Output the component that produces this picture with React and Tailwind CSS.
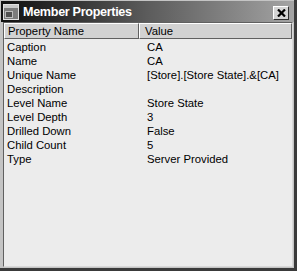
import React from "react";

const rows = [
  ["Caption", "CA"],
  ["Name", "CA"],
  ["Unique Name", "[Store].[Store State].&[CA]"],
  ["Description", ""],
  ["Level Name", "Store State"],
  ["Level Depth", "3"],
  ["Drilled Down", "False"],
  ["Child Count", "5"],
  ["Type", "Server Provided"],
];

const App = () => {
  return (
    <div
      className="w-[297px] h-[271px] flex flex-col bg-[#c4c4c4] border-r-[3px] border-b-[3px] border-[#3a3a3a] overflow-hidden"
      style={{ fontFamily: '"Liberation Sans", Arial, sans-serif' }}
    >
      {/* title bar */}
      <div className="h-[21px] ml-[1px] mt-[1px] flex items-center bg-gradient-to-r from-[#101010] via-[#5c5c5c] to-[#a4a4a4]">
        <div className="ml-[2px] w-[16px] h-[16px] bg-[#7c7c7c] border border-[#e0e0e0] flex flex-col">
          <div className="h-[3px] bg-[#c8c8c8]" />
          <div className="flex-1 flex items-end">
            <div className="ml-[1px] mb-[1px] w-[8px] h-[7px] bg-[#505050] border border-[#bdbdbd]" />
          </div>
        </div>
        <span className="ml-[4px] mt-[2px] text-white font-bold text-[12.6px] tracking-tight">
          Member Properties
        </span>
        <div className="ml-auto mr-[5px] mt-[3px] w-[16px] h-[14px] bg-[#d4d4d4] border border-t-white border-l-white border-r-[#303030] border-b-[#303030] flex items-center justify-center">
          <svg width="9" height="8" viewBox="0 0 9 8">
            <path d="M1 0.5 L8 7.5 M8 0.5 L1 7.5" stroke="#000" strokeWidth="2.2" />
          </svg>
        </div>
      </div>

      {/* list body */}
      <div className="flex-1 ml-[3px] mr-[1px] mb-[1px] bg-[#ececec] border border-l-[#606060] border-t-[#606060] border-r-[#d8d8d8] border-b-[#d8d8d8] flex flex-col text-[11.3px] text-black">
        <div className="flex h-[16px]">
          <div className="w-[135px] pl-[3px] flex items-center bg-[#d2d2d2] border border-t-white border-l-white border-r-[#606060] border-b-[#606060]">
            Property Name
          </div>
          <div className="flex-1 pl-[5px] flex items-center bg-[#d2d2d2] border border-t-white border-l-white border-r-[#606060] border-b-[#606060]">
            Value
          </div>
        </div>
        <div className="pt-[1px]">
          {rows.map(([name, value]) => (
            <div key={name} className="flex h-[14px] items-center">
              <div className="w-[135px] pl-[3px]">{name}</div>
              <div className="flex-1 pl-[8px]">{value}</div>
            </div>
          ))}
        </div>
      </div>
    </div>
  );
};

export default App;
